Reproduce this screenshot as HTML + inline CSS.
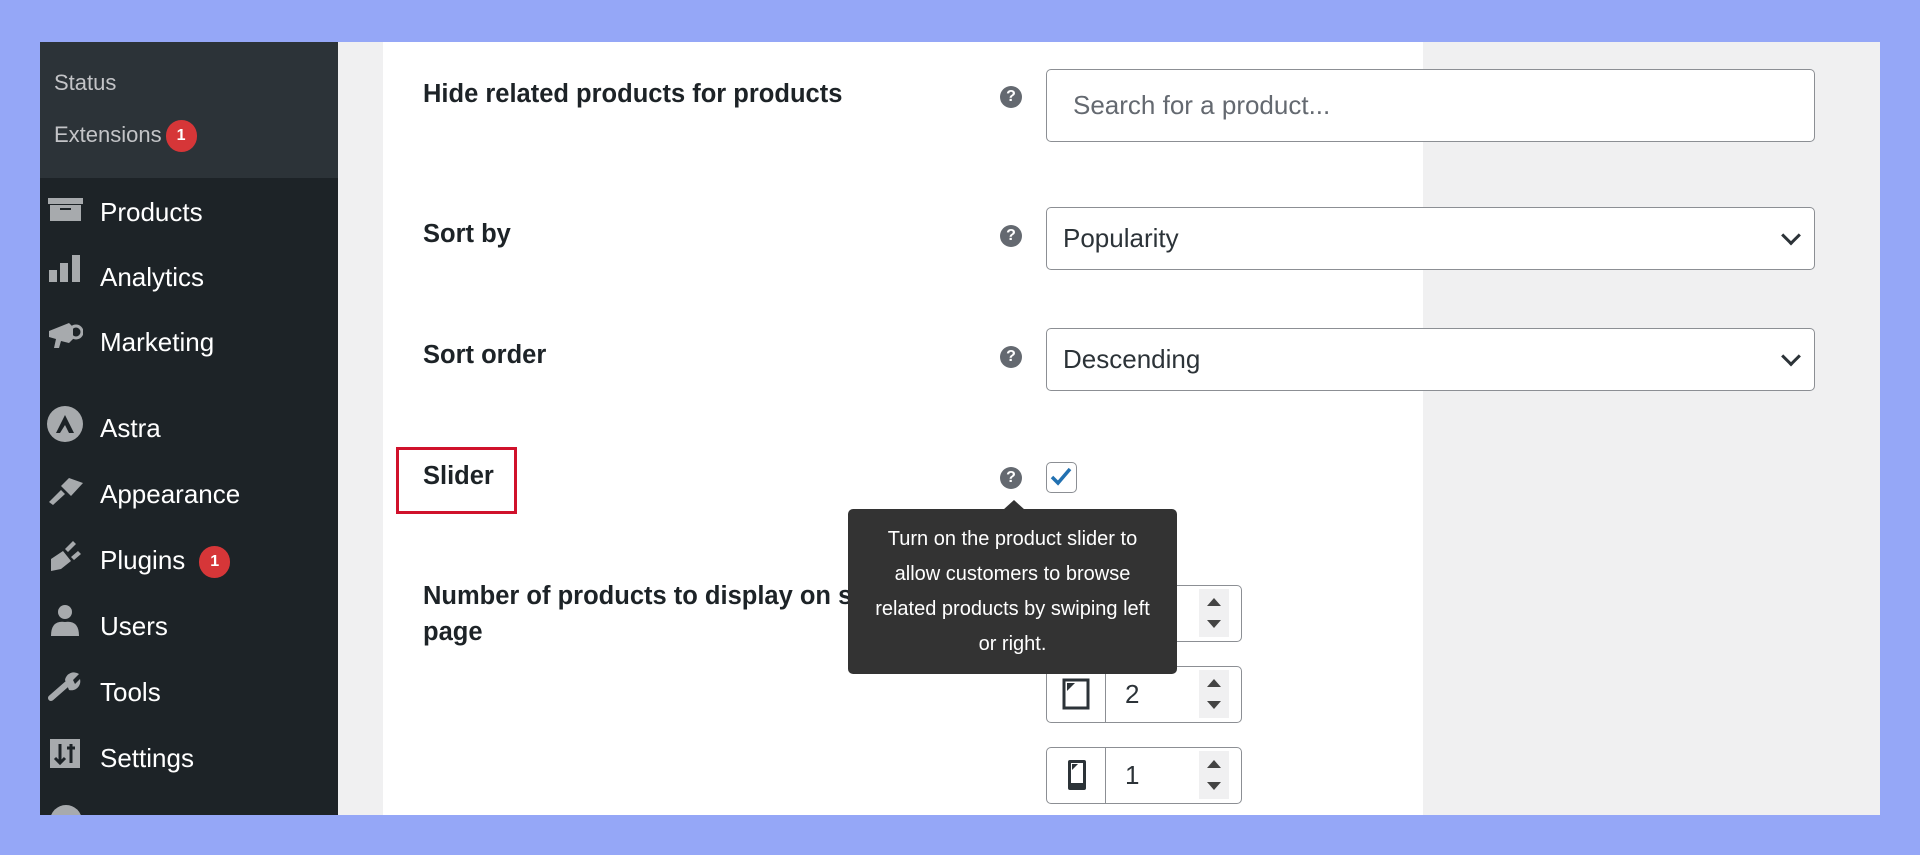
<!DOCTYPE html>
<html><head><meta charset="utf-8"><style>
*{box-sizing:border-box;margin:0;padding:0}
body{width:1920px;height:855px;background:#95a7f7;position:relative;overflow:hidden;font-family:"Liberation Sans",sans-serif}
.abs{position:absolute}
#frame{left:40px;top:42px;width:1840px;height:773px;background:#f0f0f1;overflow:hidden}
#side{left:0;top:0;width:298px;height:773px;background:#1d2327}
#sub{left:0;top:0;width:298px;height:136px;background:#2c3338}
.subi{left:14px;color:#c3c4c7;font-size:22px}
.badge{display:inline-block;background:#d63638;color:#fff;border-radius:17px;font-size:16px;font-weight:bold;height:32px;line-height:32px;padding:0 11px;vertical-align:middle;margin-left:4px}
.mi{left:60px;color:#fff;font-size:26px;height:40px;line-height:40px}
.ic{left:7px;width:36px;height:36px}
#panel{left:343px;top:0;width:1040px;height:773px;background:#fff}
.lbl{left:423px;color:#1d2327;font-size:25.5px;font-weight:bold;letter-spacing:0}
.help{width:22px;height:22px;border-radius:50%;background:#646970;color:#fff;font-size:16px;font-weight:bold;text-align:center;line-height:22px;left:1000px}
.inp{left:1046px;width:769px;border:1.5px solid #8c8f94;border-radius:5px;background:#fff;font-size:26px;color:#2c3338}
.chev{position:absolute;right:16px;top:50%;width:14px;height:14px;border-right:3px solid #2c3338;border-bottom:3px solid #2c3338;transform:translateY(-75%) rotate(45deg)}
.num{left:1046px;width:196px;height:57px;border:1.5px solid #8c8f94;border-radius:5px;background:#fff}
.num .cell{position:absolute;left:0;top:0;width:59px;height:100%;border-right:1.5px solid #8c8f94}
.num .v{position:absolute;left:78px;top:0;line-height:54px;font-size:26px;color:#2c3338}
.num .sp{position:absolute;right:12px;top:3px;width:30px;height:48px;background:#f0f0f1}
.up,.dn{position:absolute;left:8px;width:0;height:0;border-left:7px solid transparent;border-right:7px solid transparent}
.up{top:9px;border-bottom:8px solid #444}.dn{top:31px;border-top:8px solid #444}
</style></head><body>
<div id="frame" class="abs">
 <div id="side" class="abs">
  <div id="sub" class="abs"></div>
  <div class="abs subi" style="top:28px">Status</div>
  <div class="abs subi" style="top:78px">Extensions<span class="badge">1</span></div>

  <svg class="abs ic" style="top:152px" viewBox="0 0 36 36"><rect x="1" y="4" width="35" height="6" fill="#a7aaad"/><rect x="3" y="11" width="31" height="16" fill="#a7aaad"/><rect x="13" y="14" width="11" height="2" fill="#1d2327"/></svg>
  <div class="abs mi" style="top:150px">Products</div>

  <svg class="abs ic" style="top:210px" viewBox="0 0 36 36"><rect x="2" y="18" width="8" height="12" fill="#a7aaad"/><rect x="13" y="11" width="8" height="19" fill="#a7aaad"/><rect x="25" y="3" width="8" height="27" fill="#a7aaad"/></svg>
  <div class="abs mi" style="top:215px">Analytics</div>

  <svg class="abs ic" style="top:275px" viewBox="0 0 36 36"><path d="M2 14 L22 6 L26 10 L26 22 L22 26 L14 24 L12 31 L7 31 L9 22 L2 20Z" fill="#a7aaad"/><circle cx="29" cy="15" r="6" fill="none" stroke="#a7aaad" stroke-width="3"/></svg>
  <div class="abs mi" style="top:280px">Marketing</div>

  <svg class="abs ic" style="top:364px" viewBox="0 0 36 36"><circle cx="18" cy="18" r="18" fill="#a7aaad"/><path d="M9 27 L18 9 L27 27 L22 27 L18 19 L13 27Z" fill="#1d2327"/></svg>
  <div class="abs mi" style="top:366px">Astra</div>

  <svg class="abs ic" style="top:430px" viewBox="0 0 36 36"><path d="M2 30 L14 18 L18 22 L6 33Z M14 14 L22 6 L36 11 L24 24Z" fill="#a7aaad"/></svg>
  <div class="abs mi" style="top:432px">Appearance</div>

  <svg class="abs ic" style="top:495px" viewBox="0 0 36 36"><path d="M4 34 L4 22 L16 14 L24 24 L14 32Z M18 12 L26 4 L29 7 L21 15Z M24 20 L31 14 L34 17 L27 23Z" fill="#a7aaad"/></svg>
  <div class="abs mi" style="top:498px">Plugins<span class="badge" style="margin-left:14px">1</span></div>

  <svg class="abs ic" style="top:560px" viewBox="0 0 36 36"><circle cx="18" cy="10" r="7" fill="#a7aaad"/><path d="M4 34 Q4 18 18 20 Q32 18 32 34Z" fill="#a7aaad"/></svg>
  <div class="abs mi" style="top:564px">Users</div>

  <svg class="abs ic" style="top:626px" viewBox="0 0 36 36"><path d="M4 30 L20 16" stroke="#a7aaad" stroke-width="6" stroke-linecap="round"/><path d="M18 12 A9 9 0 0 1 32 6 L26 12 L28 16 L33 11 A9 9 0 0 1 22 22Z" fill="#a7aaad"/></svg>
  <div class="abs mi" style="top:630px">Tools</div>

  <svg class="abs ic" style="top:694px" viewBox="0 0 36 36"><rect x="3" y="3" width="30" height="29" fill="#a7aaad"/><path d="M13 8 V27 M8 22 L13 27 L18 22 M24 8 V27 M20 12 H28" stroke="#1d2327" stroke-width="3" fill="none"/></svg>
  <div class="abs mi" style="top:696px">Settings</div>
  <div class="abs" style="left:10px;top:763px;width:32px;height:32px;border-radius:50%;background:#a7aaad"></div>
 </div>

 <div id="panel" class="abs"></div>
</div>

<div class="abs lbl" style="top:80px">Hide related products for products</div>
<div class="abs help" style="top:86px">?</div>
<div class="abs inp" style="top:69px;height:73px;color:#646970;padding:0 0 0 26px;line-height:70px">Search for a product...</div>

<div class="abs lbl" style="top:220px">Sort by</div>
<div class="abs help" style="top:225px">?</div>
<div class="abs inp" style="top:207px;height:63px;padding-left:16px;line-height:60px">Popularity<span class="chev"></span></div>

<div class="abs lbl" style="top:341px">Sort order</div>
<div class="abs help" style="top:346px">?</div>
<div class="abs inp" style="top:328px;height:63px;padding-left:16px;line-height:60px">Descending<span class="chev"></span></div>

<div class="abs" style="left:396px;top:447px;width:121px;height:67px;border:3px solid #d0112b"></div>
<div class="abs lbl" style="top:462px">Slider</div>
<div class="abs help" style="top:467px">?</div>
<div class="abs" style="left:1046px;top:462px;width:31px;height:31px;border:1.5px solid #8c8f94;border-radius:5px;background:#fff"><svg width="28" height="28" viewBox="0 0 28 28" style="position:absolute;left:0;top:0"><path d="M5 14 L11 20 L23 6" stroke="#2271b1" stroke-width="3.5" fill="none"/></svg></div>

<div class="abs lbl" style="top:578px;width:500px;line-height:36px">Number of products to display on single<br>page</div>

<div class="abs num" style="top:585px"><div class="sp"><div class="up"></div><div class="dn"></div></div></div>
<div class="abs num" style="top:666px"><div class="cell"><svg width="32" height="32" viewBox="0 0 32 32" style="position:absolute;left:14px;top:11px"><rect x="3" y="2" width="24" height="28" fill="none" stroke="#2c3338" stroke-width="3"/><path d="M6 5 H14 L6 13Z" fill="#2c3338"/></svg></div><div class="v">2</div><div class="sp"><div class="up"></div><div class="dn"></div></div></div>
<div class="abs num" style="top:747px"><div class="cell"><svg width="32" height="32" viewBox="0 0 32 32" style="position:absolute;left:14px;top:11px"><rect x="7" y="1" width="18" height="30" rx="2" fill="#2c3338"/><rect x="10" y="4" width="12" height="20" fill="#fff"/><path d="M11 5 H17 L11 11Z" fill="#2c3338"/></svg></div><div class="v">1</div><div class="sp"><div class="up"></div><div class="dn"></div></div></div>

<div class="abs" style="left:1003px;top:500px;width:0;height:0;border-left:11px solid transparent;border-right:11px solid transparent;border-bottom:10px solid #333"></div>
<div class="abs" style="left:848px;top:509px;width:329px;height:165px;background:#333;border-radius:5px;color:#fff;font-size:20px;text-align:center;line-height:35px;padding-top:13px;white-space:nowrap">Turn on the product slider to<br>allow customers to browse<br>related products by swiping left<br>or right.</div>
</body></html>
